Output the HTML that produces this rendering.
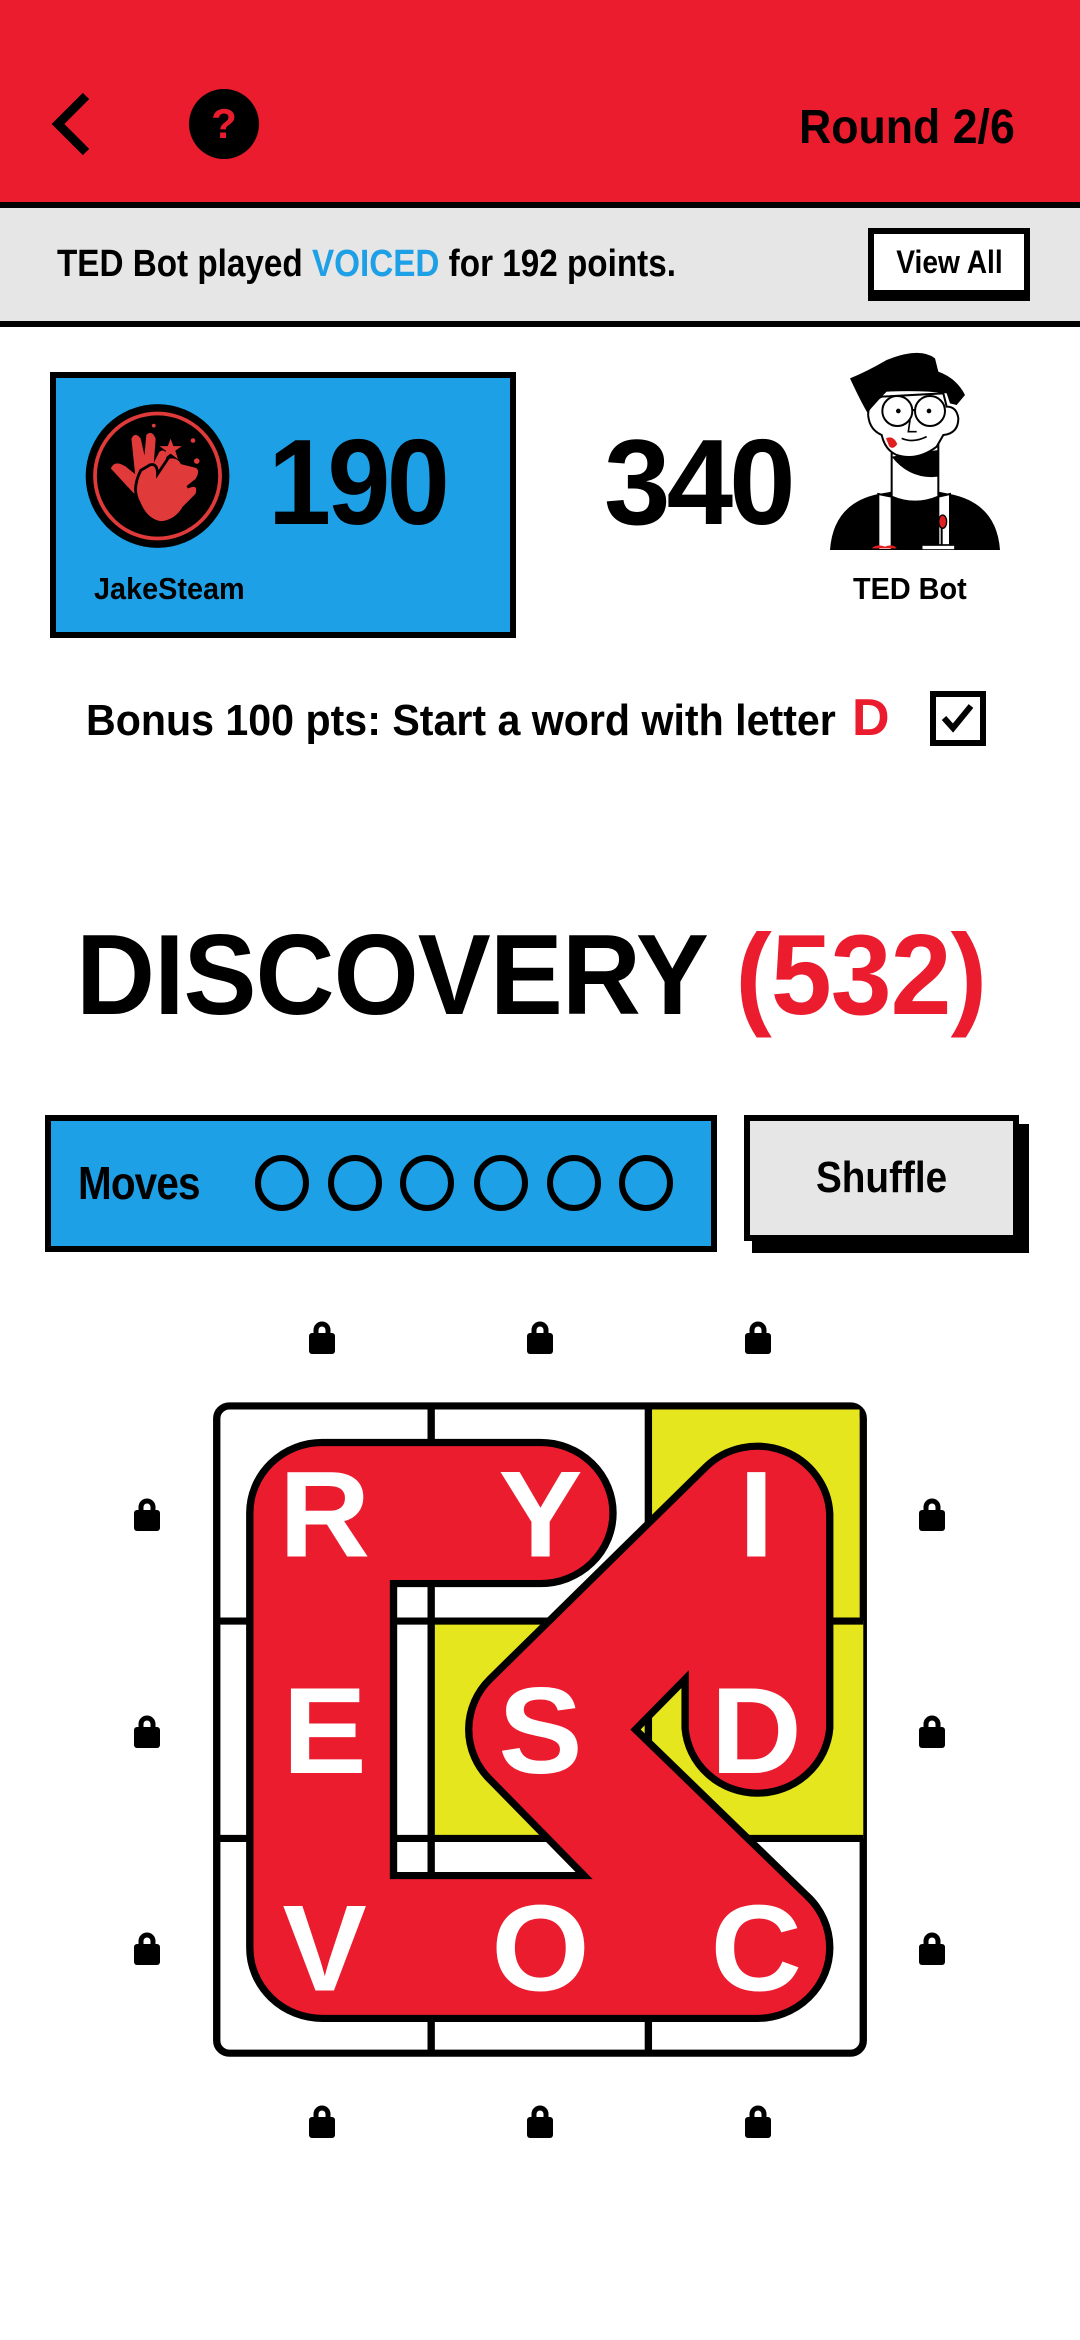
<!DOCTYPE html>
<html><head><meta charset="utf-8">
<style>
*{margin:0;padding:0;box-sizing:border-box}
html,body{width:1080px;height:2340px;background:#fff;overflow:hidden;font-family:"Liberation Sans",sans-serif;font-weight:bold;color:#000}
.a{position:absolute;white-space:nowrap}
.lock{position:absolute;width:26px;height:34px}
</style></head><body>
<div class="a" style="left:0;top:0;width:1080px;height:202px;background:#ec1c2f"></div>
<div class="a" style="left:0;top:202px;width:1080px;height:6px;background:#000"></div>
<div class="a" style="left:0;top:208px;width:1080px;height:113px;background:#e6e6e6"></div>
<div class="a" style="left:0;top:321px;width:1080px;height:6px;background:#000"></div>

<svg class="a" style="left:48px;top:92px" width="45" height="64" viewBox="0 0 45 64"><path d="M38 4 L10 32 L38 60" fill="none" stroke="#000" stroke-width="9"/></svg>
<div class="a" style="left:189px;top:89px;width:70px;height:70px;border-radius:50%;background:#000;color:#ec1c2f;font-size:42px;line-height:70px;text-align:center">?</div>
<div class="a" style="left:799px;top:98px;font-size:48px;line-height:60px;transform:scaleX(.93);transform-origin:left">Round 2/6</div>

<div class="a" style="left:57px;top:240px;font-size:38px;line-height:48px;transform:scaleX(.875);transform-origin:left">TED Bot played <span style="color:#1ea0e6">VOICED</span> for 192 points.</div>
<div class="a" style="left:868px;top:228px;width:162px;height:73px;background:#000"></div>
<div class="a" style="left:874px;top:234px;width:150px;height:56px;background:#fff;font-size:32px;line-height:56px;text-align:center"><span style="display:inline-block;transform:scaleX(.88)">View All</span></div>

<div class="a" style="left:50px;top:372px;width:466px;height:266px;background:#1ea0e6;border:6px solid #000"></div>
<svg class="a" style="left:81px;top:399px" width="154" height="154" viewBox="0 0 165 160">
<circle cx="82" cy="80" r="77" fill="#000"/>
<circle cx="82" cy="80" r="67" fill="none" stroke="#e03a3a" stroke-width="4"/>
<path d="M32 72 Q36 62 48 70 L58 78 L54 40 Q58 32 64 40 L68 58 L70 36 Q76 30 80 40 L78 66 L84 54 Q90 50 92 58 L86 82 L80 100 Q68 106 56 98 Z" fill="#e03a3a"/>
<path d="M62 108 Q54 94 64 74 L74 68 Q82 66 82 78 L94 60 Q104 58 108 66 L124 70 Q130 74 124 84 L114 92 Q128 86 124 100 L110 114 Q102 128 86 130 Q70 128 62 108 Z" fill="#e03a3a" stroke="#000" stroke-width="3"/>
<path d="M96 40 L99 48 L108 48 L101 53 L104 62 L96 56 L88 62 L91 53 L84 48 L93 48 Z" fill="#e03a3a"/>
<circle cx="120" cy="42" r="2.5" fill="#e03a3a"/><circle cx="124" cy="64" r="3" fill="#e03a3a"/><circle cx="78" cy="26" r="2" fill="#e03a3a"/>
</svg>
<div class="a" style="left:268px;top:412px;font-size:122px;line-height:140px;letter-spacing:-4px;transform:scaleX(.93);transform-origin:left">190</div>
<div class="a" style="left:94px;top:570px;font-size:31px;line-height:38px;transform:scaleX(.93);transform-origin:left">JakeSteam</div>

<div class="a" style="left:604px;top:412px;font-size:122px;line-height:140px;letter-spacing:-4px;transform:scaleX(.98);transform-origin:left">340</div>
<svg class="a" style="left:810px;top:340px" width="210" height="220" viewBox="0 0 630 660">
<path d="M60 630 Q70 490 205 462 L245 455 L385 455 L420 462 Q560 490 570 630 Z" fill="#000"/>
<path d="M205 462 L205 630 L245 630 L245 470 Z M385 470 L385 630 L420 630 L420 462 Z" fill="#fff" stroke="#000" stroke-width="6"/>
<path d="M245 330 L245 470 Q315 500 385 470 L385 300 Z" fill="#fff" stroke="#000" stroke-width="6"/>
<path d="M245 350 Q300 420 385 410 L385 330 Z" fill="#000"/>
<path d="M215 170 Q170 190 175 230 Q180 270 215 285 Q225 330 260 345 Q320 365 380 320 L400 285 Q445 280 445 235 Q440 200 410 200 L400 160 Z" fill="#fff" stroke="#000" stroke-width="6"/>
<path d="M120 115 Q170 95 230 60 Q330 20 375 55 L385 95 Q440 115 465 165 L440 195 L420 190 L410 160 Q330 150 230 155 L215 170 L172 218 Q150 180 120 115 Z" fill="#000"/>
<circle cx="262" cy="213" r="45" fill="none" stroke="#000" stroke-width="6"/>
<circle cx="360" cy="213" r="45" fill="none" stroke="#000" stroke-width="6"/>
<path d="M307 210 L315 210" stroke="#000" stroke-width="6"/>
<circle cx="265" cy="213" r="7" fill="#000"/><circle cx="357" cy="213" r="7" fill="#000"/>
<path d="M300 240 L295 275 L320 275 M275 295 Q310 310 350 290" fill="none" stroke="#000" stroke-width="5"/>
<path d="M228 295 Q250 285 262 312 Q250 330 238 320 Z" fill="#e02020"/>
<path d="M185 625 Q200 610 225 620 Q250 610 260 625 Z" fill="#e02020"/>
<rect x="335" y="615" width="100" height="15" fill="#fff" stroke="#000" stroke-width="5"/>
<path d="M345 555 L375 615 M395 555 L395 615" stroke="#000" stroke-width="6"/>
<ellipse cx="398" cy="545" rx="12" ry="20" fill="#e02020" stroke="#000" stroke-width="4"/>
<rect x="0" y="630" width="630" height="30" fill="#fff"/>
</svg>
<div class="a" style="left:853px;top:570px;font-size:31px;line-height:38px;transform:scaleX(.93);transform-origin:left">TED Bot</div>

<div class="a" style="left:86px;top:693px;font-size:44px;line-height:56px;transform:scaleX(.935);transform-origin:left">Bonus 100 pts: Start a word with letter</div>
<div class="a" style="left:852px;top:688px;font-size:52px;line-height:60px;color:#ec1c2f">D</div>
<div class="a" style="left:930px;top:691px;width:56px;height:55px;border:6px solid #000;background:#fff"></div>
<svg class="a" style="left:938px;top:700px" width="40" height="36" viewBox="0 0 40 36"><path d="M6 18 L15 28 L33 6" fill="none" stroke="#000" stroke-width="6"/></svg>

<div class="a" style="left:76px;top:910px;font-size:114px;line-height:132px;letter-spacing:-1px;transform:scaleX(.96);transform-origin:left">DISCOVERY <span style="color:#ec1c2f">(532)</span></div>

<div class="a" style="left:45px;top:1115px;width:672px;height:137px;background:#1ea0e6;border:6px solid #000"></div>
<div class="a" style="left:78px;top:1155px;font-size:46px;line-height:56px;letter-spacing:-1px;transform:scaleX(.88);transform-origin:left">Moves</div>
<svg class="a" style="left:250px;top:1150px" width="430" height="70" viewBox="0 0 430 70">
<g fill="none" stroke="#000" stroke-width="6">
<ellipse cx="32" cy="33" rx="24" ry="25"/><ellipse cx="105" cy="33" rx="24" ry="25"/><ellipse cx="177" cy="33" rx="24" ry="25"/><ellipse cx="251" cy="33" rx="24" ry="25"/><ellipse cx="324" cy="33" rx="24" ry="25"/><ellipse cx="396" cy="33" rx="24" ry="25"/></g></svg>

<div class="a" style="left:752px;top:1124px;width:277px;height:129px;background:#000"></div>
<div class="a" style="left:744px;top:1115px;width:275px;height:126px;background:#e6e6e6;border:6px solid #000;font-size:44px;line-height:114px;text-align:center"><span style="display:inline-block;transform:scaleX(.88)">Shuffle</span></div>

<svg width="0" height="0" style="position:absolute"><defs><symbol id="lk" viewBox="0 0 26 34"><path d="M7 15 V10 A6 6 0 0 1 19 10 V15" fill="none" stroke="#000" stroke-width="5"/><rect x="0" y="13" width="26" height="21" rx="3" fill="#000"/></symbol></defs></svg>
<svg class="lock" style="left:309px;top:1320px"><use href="#lk"/></svg>
<svg class="lock" style="left:527px;top:1320px"><use href="#lk"/></svg>
<svg class="lock" style="left:745px;top:1320px"><use href="#lk"/></svg>
<svg class="lock" style="left:134px;top:1497px"><use href="#lk"/></svg>
<svg class="lock" style="left:134px;top:1714px"><use href="#lk"/></svg>
<svg class="lock" style="left:134px;top:1931px"><use href="#lk"/></svg>
<svg class="lock" style="left:919px;top:1497px"><use href="#lk"/></svg>
<svg class="lock" style="left:919px;top:1714px"><use href="#lk"/></svg>
<svg class="lock" style="left:919px;top:1931px"><use href="#lk"/></svg>
<svg class="lock" style="left:309px;top:2104px"><use href="#lk"/></svg>
<svg class="lock" style="left:527px;top:2104px"><use href="#lk"/></svg>
<svg class="lock" style="left:745px;top:2104px"><use href="#lk"/></svg>

<svg class="a" style="left:180px;top:1380px" width="720" height="700" viewBox="0 0 1568 1568" preserveAspectRatio="none">
<rect x="80" y="58" width="1408" height="1450" rx="28" fill="#fff" stroke="#000" stroke-width="16"/>
<rect x="1020" y="66" width="460" height="474" fill="#e6e61e"/>
<rect x="547" y="540" width="941" height="487" fill="#e6e61e"/>
<g stroke="#000" stroke-width="16"><path d="M547 58 V1508 M1020 58 V1508 M80 540 H1488 M80 1027 H1488"/></g>
<path d="M152 298 A158 158 0 0 1 310 140 L785 140 A158 158 0 0 1 785 456 L465 456 L465 1110 L880 1110 L675 895 A160 160 0 0 1 675 670 L1145 195 A158 158 0 0 1 1415 300 L1415 780 A158 158 0 0 1 1100 780 L1100 670 L992 783 L1365 1155 A160 160 0 0 1 1415 1270 A158 158 0 0 1 1255 1430 L310 1430 A158 158 0 0 1 152 1272 Z" fill="#ec1c2f" stroke="#000" stroke-width="16" stroke-linejoin="miter"/>
<g fill="#fff" font-family="Liberation Sans, sans-serif" font-weight="bold" font-size="275" text-anchor="middle">
<text x="315" y="395">R</text><text x="785" y="395">Y</text><text x="1255" y="395">I</text>
<text x="315" y="880">E</text><text x="785" y="880">S</text><text x="1255" y="880">D</text>
<text x="315" y="1368">V</text><text x="785" y="1368">O</text><text x="1255" y="1368">C</text>
</g>
</svg>
</body></html>
